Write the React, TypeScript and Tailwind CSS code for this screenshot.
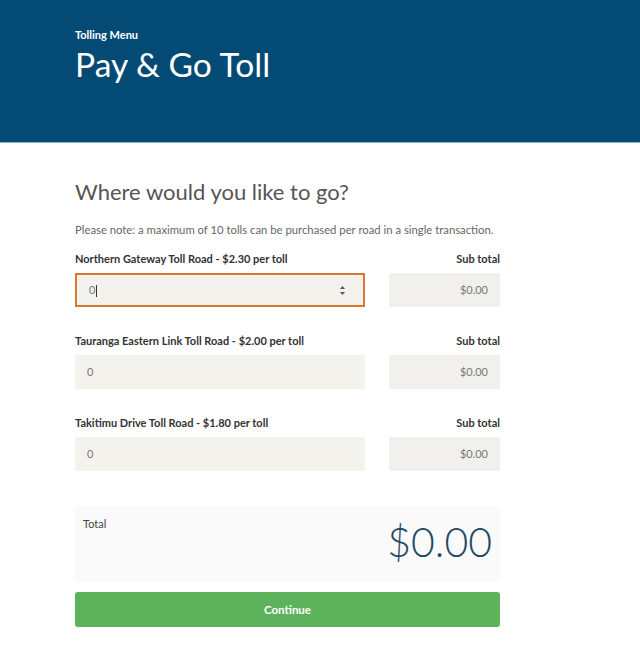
import React from "react";

const roads = [
  { name: "Northern Gateway Toll Road - $2.30 per toll", active: true },
  { name: "Tauranga Eastern Link Toll Road - $2.00 per toll", active: false },
  { name: "Takitimu Drive Toll Road - $1.80 per toll", active: false },
];

export default function App() {
  return (
    <div className="w-[640px] h-[653px] bg-white" style={{ fontFamily: "Lato, 'Noto Sans', sans-serif" }}>
      <header className="h-[143px] bg-[#034a75] border-b border-[#8fb3c8] pl-[75px] pt-[28px]">
        <div className="text-[11px] font-bold text-white leading-[14px]">Tolling Menu</div>
        <h1 className="text-[33.6px] text-white leading-[40px] mt-[2px]">Pay &amp; Go Toll</h1>
      </header>
      <main className="w-[425px] ml-[75px] pt-[34px]">
        <h2 className="text-[22px] text-[#555] leading-[30px]">Where would you like to go?</h2>
        <p className="text-[11.3px] text-[#666] mt-[15px] leading-[16px] whitespace-nowrap">
          Please note: a maximum of 10 tolls can be purchased per road in a single transaction.
        </p>
        <div className="mt-[14px] flex flex-col gap-[27px]">
          {roads.map((r) => (
            <div key={r.name}>
              <div className="flex justify-between text-[11px] font-bold text-[#333] leading-[14px]">
                <span>{r.name}</span>
                <span>Sub total</span>
              </div>
              <div className="flex justify-between mt-[7px]">
                <div
                  className={`w-[290px] h-[34px] bg-[#f4f2ed] flex items-center pl-[12px] pr-[16px] text-[11px] text-[#777] ${
                    r.active ? "border-2 border-[#d9782f] pl-[10px]" : ""
                  }`}
                >
                  <span className="flex-1">
                    0{r.active && <span className="inline-block w-px h-[12px] bg-[#333] align-middle ml-[1px]" />}
                  </span>
                  {r.active && (
                    <svg width="7" height="11" viewBox="0 0 7 11" className="mr-[1px]">
                      <path d="M3.5 1 L6 4 L1 4 Z" fill="#555" />
                      <path d="M3.5 10 L6 7 L1 7 Z" fill="#555" />
                    </svg>
                  )}
                </div>
                <div className="w-[111px] h-[34px] bg-[#f1f0ec] flex items-center justify-end pr-[12px] text-[11px] text-[#777]">
                  $0.00
                </div>
              </div>
            </div>
          ))}
        </div>
        <div className="mt-[35px] h-[76px] bg-[#fafafb] flex justify-between pl-[8px] pr-[8px] pt-[11px]">
          <span className="text-[11px] text-[#444] leading-[14px]">Total</span>
          <span className="text-[41px] font-light text-[#1f4a63] leading-[50px] mt-0">$0.00</span>
        </div>
        <button className="mt-[10px] w-full h-[35px] bg-[#5cb35c] rounded-[3px] text-white text-[11.5px] font-bold">
          Continue
        </button>
      </main>
    </div>
  );
}
